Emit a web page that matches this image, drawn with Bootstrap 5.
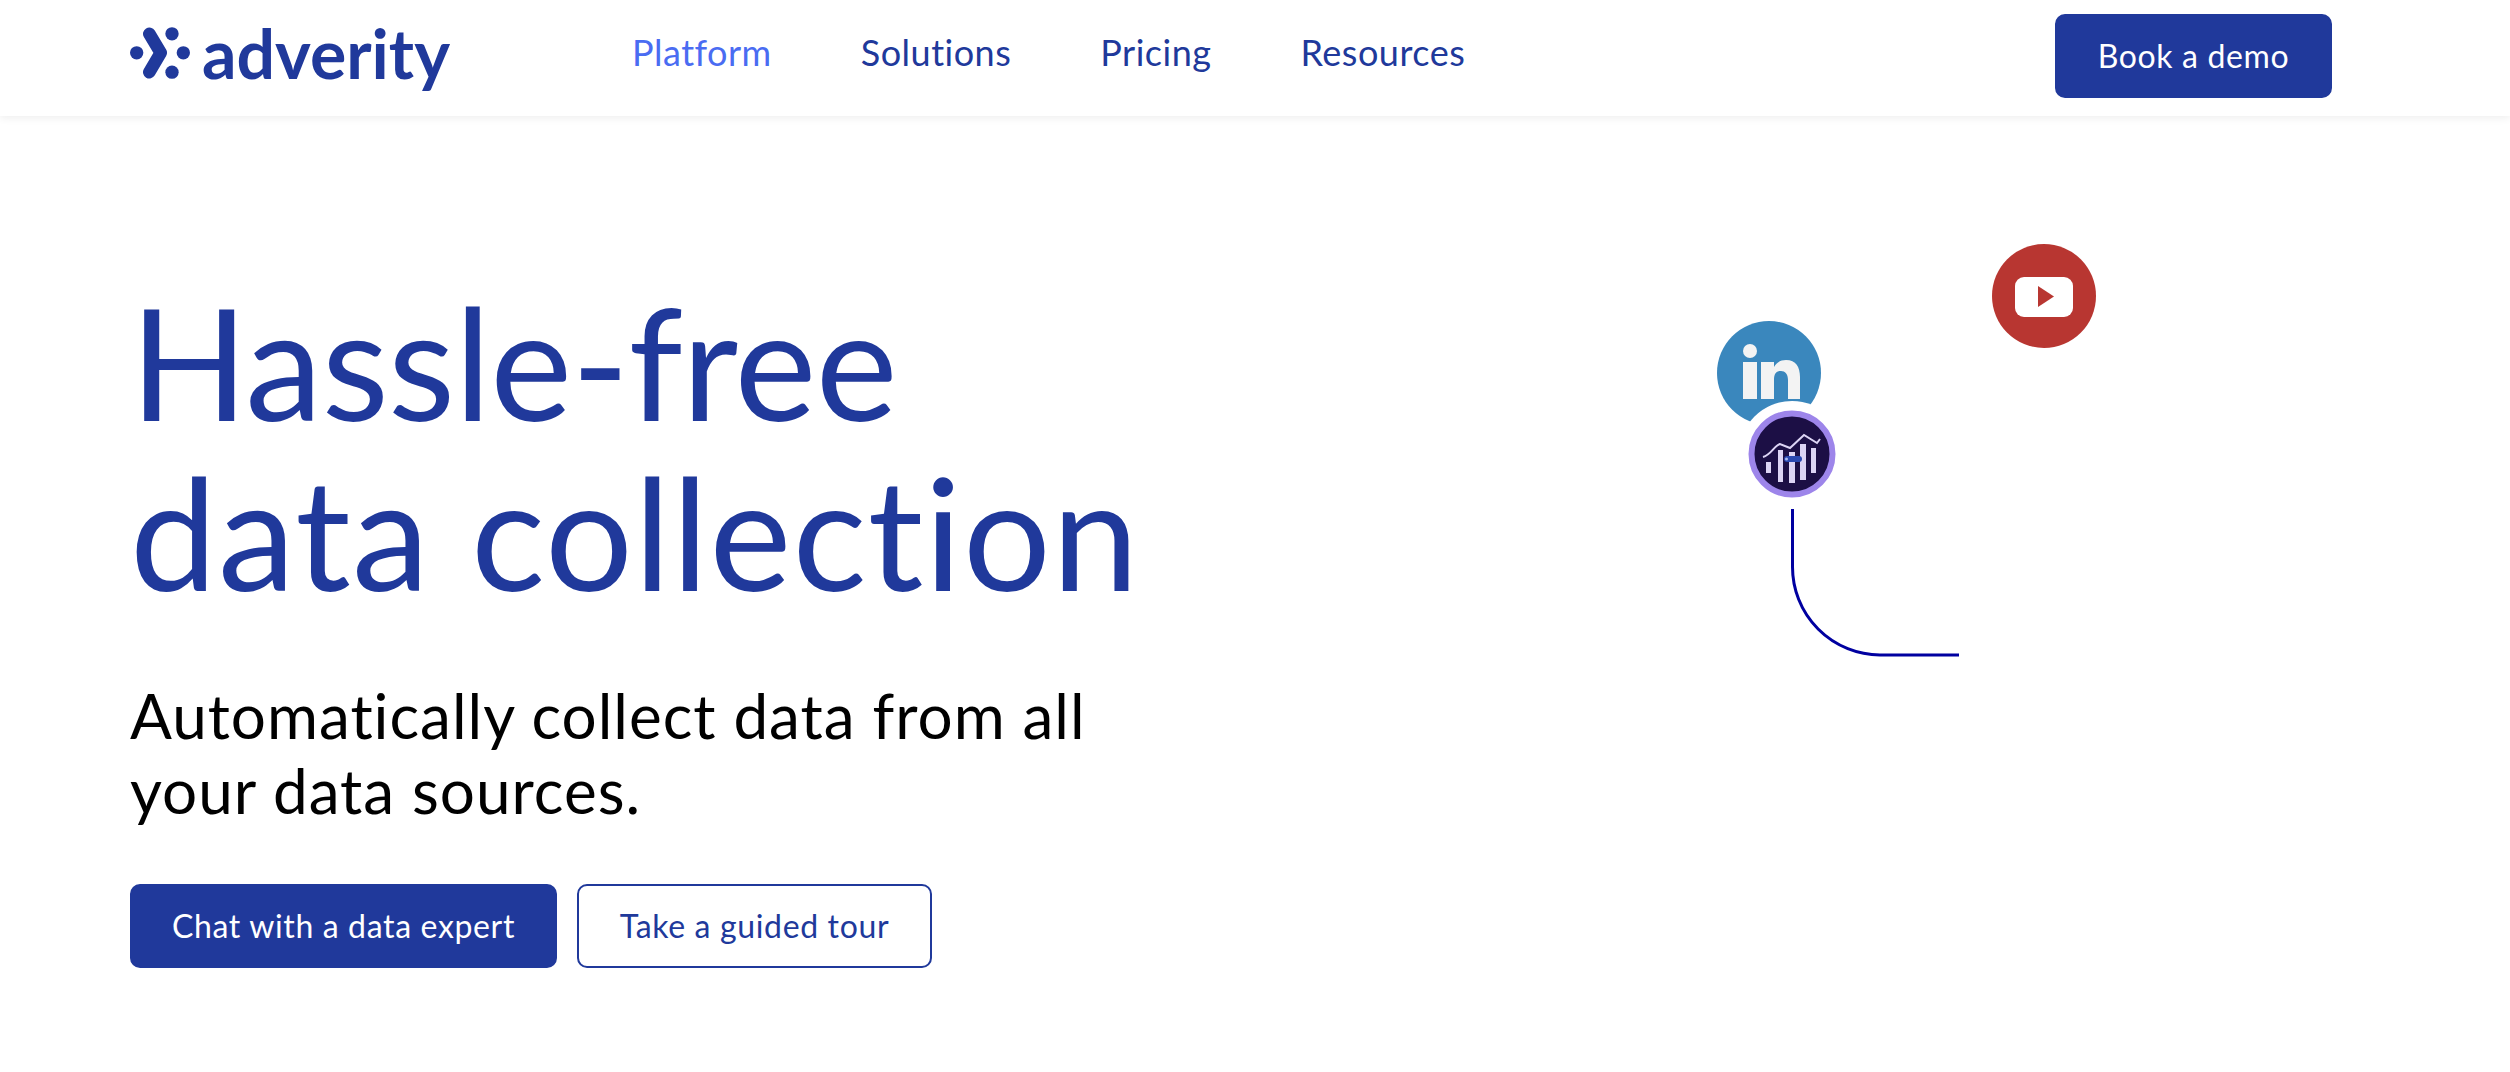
<!DOCTYPE html>
<html lang="en">
<head>
    <title>Adverity</title>
    <meta charset="utf-8">
    <meta name="viewport" content="width=device-width, initial-scale=1">
    <link href="https://cdn.jsdelivr.net/npm/bootstrap@5.3.3/dist/css/bootstrap.min.css" rel="stylesheet">
    <script src="https://cdn.jsdelivr.net/npm/bootstrap@5.3.3/dist/js/bootstrap.bundle.min.js"></script>
    <style>
        body {
            font-family: "Lato", "Liberation Sans", sans-serif;
            font-variant-ligatures: none;
            background: #fff;
            overflow: hidden;
        }
        .top-bar {
            height: 116px;
            padding: 0 178px 4px 130px;
            background: #fff;
            box-shadow: 0 2px 8px rgba(0, 0, 0, .07);
        }
        .brand-link {
            display: flex;
            align-items: center;
            gap: 12px;
            margin: 0 0 7px;
            padding: 0;
            width: 502px;
            font-size: 68px;
            font-weight: 700;
            line-height: 1;
            color: #20399b;
        }
        .brand-link:hover { color: #20399b; }
        .top-bar .navbar-nav { gap: 89px; margin-bottom: 9px; }
        .top-bar .navbar-nav .nav-link {
            padding: 0;
            font-size: 36px;
            letter-spacing: .5px;
            color: #20399b;
        }
        .top-bar .navbar-nav .nav-link.active { color: #4a6cf2; }
        .btn-adv {
            display: flex;
            align-items: center;
            justify-content: center;
            height: 84px;
            border-radius: 10px;
            font-size: 32px;
            letter-spacing: .65px;
            padding: 0;
        }
        .btn-fill {
            background: #20399b;
            border: 2px solid #20399b;
            color: #fff;
        }
        .btn-line {
            background: #fff;
            border: 2px solid #20399b;
            color: #20399b;
        }
        .btn-book { width: 277px; }
        .btn-chat { width: 427px; margin-right: 20px; }
        .btn-tour { width: 355px; }
        .hero-wrap { height: 956px; }
        .hero-text {
            width: 1530px;
            padding: 160px 0 0 130px;
        }
        .hero-title {
            margin: 0 0 62px;
            font-size: 155px;
            font-weight: 400;
            line-height: 170px;
            color: #20399b;
        }
        .title-one { letter-spacing: -.7px; }
        .title-two { letter-spacing: 1.2px; }
        .hero-sub {
            margin: 0 0 56px;
            font-size: 62px;
            letter-spacing: 1px;
            line-height: 75px;
            color: #000;
        }
        .hero-canvas { flex: 1; }
        .src-node {
            position: absolute;
            display: block;
        }
        .node-yt { left: 462px; top: 128px; width: 104px; height: 104px; }
        .node-in { left: 187px; top: 205px; width: 104px; height: 104px; }
        .node-ad { left: 209px; top: 285px; width: 106px; height: 106px; }
        .node-line { left: 260px; top: 392px; width: 172px; height: 150px; }
    </style>
</head>
<body>

<nav class="navbar navbar-expand top-bar">
    <a class="navbar-brand brand-link" href="#">
        <svg width="60" height="52" viewBox="90 75 180 155">
            <path d="M148 95 L182 152 L148 210" fill="none" stroke="#20399b" stroke-width="38" stroke-linecap="round" stroke-linejoin="round"/>
            <circle cx="216" cy="95" r="20" fill="#20399b"/>
            <circle cx="250" cy="152" r="20" fill="#20399b"/>
            <circle cx="216" cy="210" r="20" fill="#20399b"/>
            <circle cx="110" cy="152" r="20" fill="#20399b"/>
        </svg>
        <span>adverity</span>
    </a>
    <ul class="navbar-nav">
        <li class="nav-item"><a class="nav-link active" href="#">Platform</a></li>
        <li class="nav-item"><a class="nav-link" href="#">Solutions</a></li>
        <li class="nav-item"><a class="nav-link" href="#">Pricing</a></li>
        <li class="nav-item"><a class="nav-link" href="#">Resources</a></li>
    </ul>
    <a class="btn btn-adv btn-fill btn-book ms-auto" href="#">Book a demo</a>
</nav>

<div class="d-flex hero-wrap">
    <div class="hero-text">
        <h1 class="hero-title"><span class="title-one">Hassle-free</span><br><span class="title-two">data collection</span></h1>
        <p class="hero-sub">Automatically collect data from all<br>your data sources.</p>
        <div class="d-flex hero-actions">
            <a class="btn btn-adv btn-fill btn-chat" href="#">Chat with a data expert</a>
            <a class="btn btn-adv btn-line btn-tour" href="#">Take a guided tour</a>
        </div>
    </div>
    <div class="hero-canvas position-relative">
        <svg class="src-node node-yt" viewBox="0 0 104 104">
            <circle cx="52" cy="52" r="52" fill="#b83631"/>
            <rect x="23" y="33" width="58" height="40" rx="9" fill="#fff"/>
            <path d="M46 42 L62 52.5 L46 63 Z" fill="#b83631"/>
        </svg>
        <svg class="src-node node-in" viewBox="0 0 104 104">
            <circle cx="52" cy="52" r="52" fill="#3a87bd"/>
            <circle cx="33" cy="30" r="7" fill="#f3f3f3"/>
            <rect x="26" y="41" width="14" height="37" fill="#f3f3f3"/>
            <path d="M44 41 H57 V46 C60 41 64 39 69 39 C79 39 83 46 83 56 V78 H71 V59 C71 53 68 50 64 50 C59 50 57 53 57 59 V78 H44 Z" fill="#f3f3f3"/>
        </svg>
        <svg class="src-node node-ad" viewBox="0 0 106 106">
            <circle cx="53" cy="53" r="53" fill="#fff"/>
        </svg>
        <svg class="src-node node-ad" viewBox="0 0 106 106">
            <circle cx="53" cy="53" r="40.5" fill="#1c0f45" stroke="#9d85ea" stroke-width="6"/>
            <g fill="#dcd4f4">
                <rect x="27" y="61" width="5" height="11" />
                <rect x="39" y="49" width="5" height="32" />
                <rect x="50" y="51" width="6" height="31" />
                <rect x="61" y="43" width="6" height="36" />
                <rect x="72" y="47" width="5" height="25" />
            </g>
            <path d="M24 56 C32 54 35 45 41 43 L51 47 L65 34 L78 42 L81 38" fill="none" stroke="#dcd4f4" stroke-width="2"/>
            <rect x="45" y="55" width="18" height="6" rx="3" fill="#2a48b0"/>
            <circle cx="47.5" cy="58" r="1.5" fill="#a9b8ee"/>
        </svg>
        <svg class="src-node node-line" viewBox="0 0 172 150">
            <path d="M2.5 1 V59 A88 88 0 0 0 90 147 H169" fill="none" stroke="#0000a0" stroke-width="3"/>
        </svg>
    </div>
</div>

</body>
</html>
